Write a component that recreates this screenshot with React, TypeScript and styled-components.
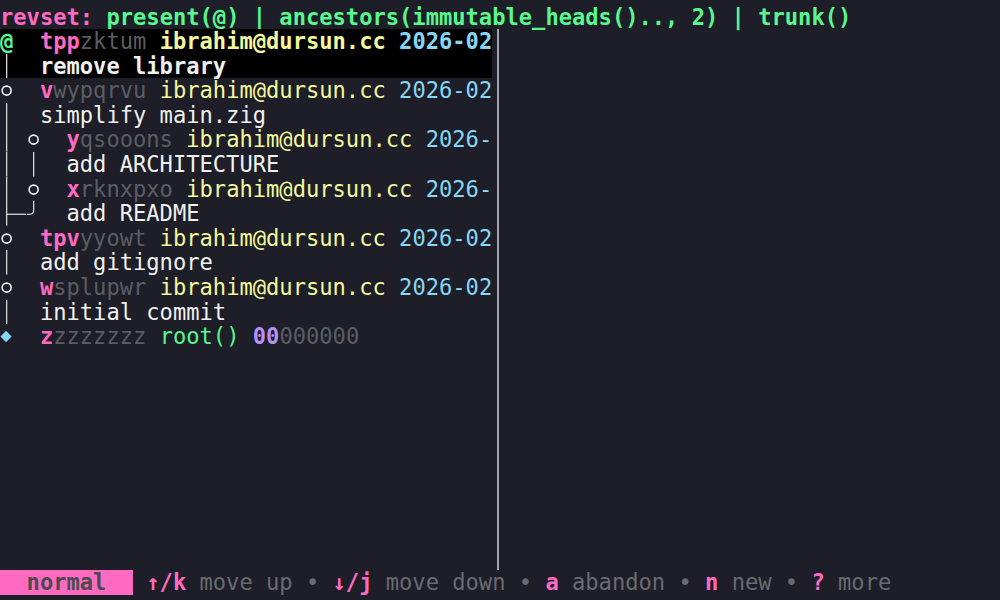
import React from "react";
import styled, { createGlobalStyle, css } from "styled-components";

const LH = 24.6;
const CW = 13.3;

const palette = {
  pink: "#ff6ac1",
  green: "#5af78e",
  yellow: "#f3f99d",
  cyan: "#86d6f6",
  grey: "#5c5d63",
  purple: "#b690f2",
  white: "#f1f1f0",
  dim: "#6a6b70",
  line: "#d6d6d6",
};

type ColorKey = keyof typeof palette;

const GlobalStyle = createGlobalStyle`
  html, body {
    margin: 0;
    padding: 0;
    background: #1d1e28;
  }
  body {
    font-family: "DejaVu Sans Mono", "Liberation Mono", monospace;
    font-size: 22.1px;
    line-height: ${LH}px;
    color: ${palette.white};
  }
`;

const Screen = styled.div`
  width: 1000px;
  height: 600px;
  box-sizing: border-box;
  padding-top: 4.5px;
  overflow: hidden;
  display: flex;
  flex-direction: column;
  background: #1d1e28;
`;

const Line = styled.div<{ $selected?: boolean }>`
  display: flex;
  height: ${LH}px;
  white-space: pre;
  ${(p) =>
    p.$selected &&
    css`
      background: #000;
    `}
`;

const Seg = styled.span<{ $c?: ColorKey; $b?: boolean }>`
  color: ${(p) => palette[p.$c ?? "white"]};
  font-weight: ${(p) => (p.$b ? 700 : 400)};
`;

const Main = styled.div`
  display: flex;
  height: ${LH * 22}px;
`;

const LogPane = styled.div`
  width: ${CW * 37}px;
  display: flex;
  flex-direction: column;
`;

const Divider = styled.div`
  width: ${CW}px;
  display: flex;
  justify-content: center;
  &::before {
    content: "";
    width: 2px;
    margin-left: -1px;
    background: #a3a5aa;
  }
`;

const DetailPane = styled.div`
  flex: 1;
`;

const Footer = styled.div`
  display: flex;
  height: ${LH}px;
  white-space: pre;
`;

const ModeBadge = styled.span`
  width: ${CW * 10}px;
  background: ${palette.pink};
  color: #4b4b4f;
  font-weight: 700;
  text-align: center;
`;

const Glyph = styled.svg`
  display: block;
  flex-shrink: 0;
  width: ${CW}px;
  height: ${LH}px;
`;

const AtGlyph = styled.span`
  width: ${CW}px;
  color: ${palette.green};
  font-weight: 700;
  flex-shrink: 0;
`;

const mid = CW / 2;
const midY = LH / 2;

function GraphCell({ ch }: { ch: string }) {
  if (ch === "@") return <AtGlyph>@</AtGlyph>;
  const stroke = palette.line;
  let body: React.ReactNode = null;
  switch (ch) {
    case "│":
      body = <line x1={mid} y1={0} x2={mid} y2={LH} stroke={stroke} strokeWidth={1.3} />;
      break;
    case "○":
      body = <circle cx={mid} cy={midY + 0.3} r={4.5} fill="none" stroke="#f2f2f2" strokeWidth={1.6} />;
      break;
    case "├":
      body = (
        <>
          <line x1={mid} y1={0} x2={mid} y2={LH} stroke={stroke} strokeWidth={1.3} />
          <line x1={mid} y1={midY + 1} x2={CW} y2={midY + 1} stroke={stroke} strokeWidth={1.3} />
        </>
      );
      break;
    case "─":
      body = <line x1={0} y1={midY + 1} x2={CW} y2={midY + 1} stroke={stroke} strokeWidth={1.3} />;
      break;
    case "╯":
      body = (
        <path
          d={`M ${mid} 0 L ${mid} ${midY - 3} Q ${mid} ${midY + 1} ${mid - 4} ${midY + 1} L 0 ${midY + 1}`}
          fill="none"
          stroke={stroke}
          strokeWidth={1.3}
        />
      );
      break;
    case "◆":
      body = (
        <polygon
          points={`${mid - 0.6},${midY - 5.6} ${mid + 5},${midY + 0.2} ${mid - 0.6},${midY + 6} ${mid - 6.2},${midY + 0.2}`}
          fill={palette.cyan}
        />
      );
      break;
    default:
      body = null;
  }
  return (
    <Glyph viewBox={`0 0 ${CW} ${LH}`} preserveAspectRatio="none">
      {body}
    </Glyph>
  );
}

type S = { t: string; c?: ColorKey; b?: boolean };
type LogLine = { graph: string; segs: S[]; selected?: boolean };

const EMAIL = "ibrahim@dursun.cc";

function commit(prefix: string, rest: string, date: string, bold = false): S[] {
  return [
    { t: prefix, c: "pink", b: true },
    { t: rest, c: "grey" },
    { t: " " },
    { t: EMAIL, c: "yellow", b: bold },
    { t: " " },
    { t: date, c: "cyan", b: bold },
  ];
}

const lines: LogLine[] = [
  { graph: "@  ", segs: commit("tpp", "zktum", "2026-02", true), selected: true },
  { graph: "│  ", segs: [{ t: "remove library", b: true }], selected: true },
  { graph: "○  ", segs: commit("v", "wypqrvu", "2026-02") },
  { graph: "│  ", segs: [{ t: "simplify main.zig" }] },
  { graph: "│ ○  ", segs: commit("y", "qsooons", "2026-") },
  { graph: "│ │  ", segs: [{ t: "add ARCHITECTURE" }] },
  { graph: "│ ○  ", segs: commit("x", "rknxpxo", "2026-") },
  { graph: "├─╯  ", segs: [{ t: "add README" }] },
  { graph: "○  ", segs: commit("tpv", "yyowt", "2026-02") },
  { graph: "│  ", segs: [{ t: "add gitignore" }] },
  { graph: "○  ", segs: commit("w", "splupwr", "2026-02") },
  { graph: "│  ", segs: [{ t: "initial commit" }] },
  {
    graph: "◆  ",
    segs: [
      { t: "z", c: "pink", b: true },
      { t: "zzzzzzz", c: "grey" },
      { t: " " },
      { t: "root()", c: "green" },
      { t: " " },
      { t: "00", c: "purple", b: true },
      { t: "000000", c: "grey" },
    ],
  },
];

const hints: { key: string; label: string }[] = [
  { key: "↑/k", label: "move up" },
  { key: "↓/j", label: "move down" },
  { key: "a", label: "abandon" },
  { key: "n", label: "new" },
  { key: "?", label: "more" },
];

export default function App() {
  return (
    <>
      <GlobalStyle />
      <Screen>
        <Line>
          <Seg $c="pink" $b>
            revset:
          </Seg>
          <Seg $c="green" $b>
            {" present(@) | ancestors(immutable_heads().., 2) | trunk()"}
          </Seg>
        </Line>
        <Main>
          <LogPane>
            {lines.map((l, i) => (
              <Line key={i} $selected={l.selected}>
                {Array.from(l.graph).map((ch, j) => (
                  <GraphCell key={j} ch={ch} />
                ))}
                {l.segs.map((s, k) => (
                  <Seg key={k} $c={s.c} $b={s.b}>
                    {s.t}
                  </Seg>
                ))}
              </Line>
            ))}
          </LogPane>
          <Divider />
          <DetailPane />
        </Main>
        <Footer>
          <ModeBadge>normal</ModeBadge>
          <Seg> </Seg>
          {hints.map((h, i) => (
            <React.Fragment key={h.key}>
              {i > 0 && <Seg $c="dim">{" • "}</Seg>}
              <Seg $c="pink" $b>
                {h.key}
              </Seg>
              <Seg $c="dim">{" " + h.label}</Seg>
            </React.Fragment>
          ))}
        </Footer>
      </Screen>
    </>
  );
}
